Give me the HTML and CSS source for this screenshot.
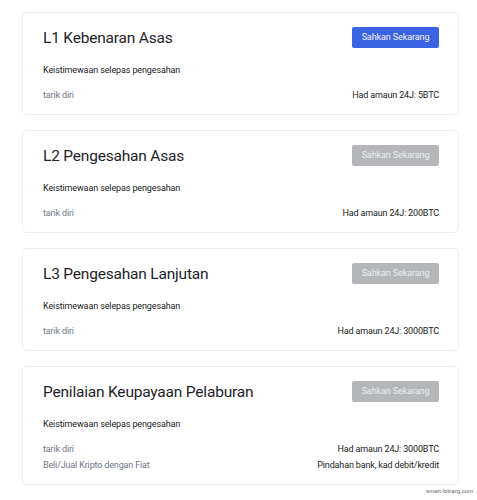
FILE: index.html
```html
<!DOCTYPE html>
<html lang="ms">
<head>
<meta charset="utf-8">
<title>Pengesahan</title>
<link rel="stylesheet" href="styles.css">
</head>
<body>
<main class="list">
  <section class="card">
    <div class="head">
      <h2 class="title">L1 Kebenaran Asas</h2>
      <button class="btn btn-primary">Sahkan Sekarang</button>
    </div>
    <p class="perk">Keistimewaan selepas pengesahan</p>
    <div class="rows">
      <div class="row"><span class="label">tarik diri</span><span class="value">Had amaun 24J: 5BTC</span></div>
    </div>
  </section>
  <section class="card">
    <div class="head">
      <h2 class="title">L2 Pengesahan Asas</h2>
      <button class="btn btn-disabled">Sahkan Sekarang</button>
    </div>
    <p class="perk">Keistimewaan selepas pengesahan</p>
    <div class="rows">
      <div class="row"><span class="label">tarik diri</span><span class="value">Had amaun 24J: 200BTC</span></div>
    </div>
  </section>
  <section class="card">
    <div class="head">
      <h2 class="title">L3 Pengesahan Lanjutan</h2>
      <button class="btn btn-disabled">Sahkan Sekarang</button>
    </div>
    <p class="perk">Keistimewaan selepas pengesahan</p>
    <div class="rows">
      <div class="row"><span class="label">tarik diri</span><span class="value">Had amaun 24J: 3000BTC</span></div>
    </div>
  </section>
  <section class="card">
    <div class="head">
      <h2 class="title">Penilaian Keupayaan Pelaburan</h2>
      <button class="btn btn-disabled">Sahkan Sekarang</button>
    </div>
    <p class="perk">Keistimewaan selepas pengesahan</p>
    <div class="rows">
      <div class="row"><span class="label">tarik diri</span><span class="value">Had amaun 24J: 3000BTC</span></div>
      <div class="row"><span class="label">Beli/Jual Kripto dengan Fiat</span><span class="value">Pindahan bank, kad debit/kredit</span></div>
    </div>
  </section>
</main>
<div class="mark">smart-bitrarg.com</div>
</body>
</html>
```

FILE: styles.css
```css
* { box-sizing: border-box; }
html, body { background: #ffffff; }
body {
  margin: 0;
  padding: 12px 18px 0 22px;
  font-family: Roboto, "Liberation Sans", Arial, sans-serif;
  color: #1e2329;
  position: relative;
  height: 500px;
  overflow: hidden;
}
.list {
  display: flex;
  flex-direction: column;
  gap: 15px;
  width: 437px;
}
.card {
  border: 1px solid #eceef0;
  border-radius: 5px;
  padding: 14px 19px 12px 20px;
  background: #fff;
}
.head {
  display: flex;
  align-items: center;
  justify-content: space-between;
  height: 21px;
}
.title {
  margin: 0;
  font-size: 15.5px;
  letter-spacing: -0.2px;
  font-weight: 400;
  line-height: 21px;
  color: #1e2329;
  position: relative;
  top: 1px;
}
.btn {
  width: 87px;
  height: 21px;
  border: none;
  border-radius: 2px;
  font-family: Roboto, "Liberation Sans", Arial, sans-serif;
  font-size: 9px;
  letter-spacing: -0.1px;
  padding: 0;
  line-height: 21px;
}
.btn-primary { background: #3a63e3; color: #f2f5ff; }
.btn-disabled { background: #b4b6ba; color: #eceef0; }
.perk {
  margin: 15px 0 0;
  font-size: 9px;
  letter-spacing: -0.12px;
  line-height: 14px;
  color: #181c22;
}
.rows {
  margin-top: 11px;
  display: flex;
  flex-direction: column;
  gap: 2px;
}
.row {
  display: flex;
  justify-content: space-between;
  font-size: 9px;
  letter-spacing: -0.15px;
  line-height: 14px;
}
.label { color: #6f7685; }
.value { color: #181c22; }
.mark {
  position: absolute;
  right: 4px;
  top: 488px;
  font-size: 6px;
  color: #666;
  font-family: "Liberation Sans", Arial, sans-serif;
}
```
